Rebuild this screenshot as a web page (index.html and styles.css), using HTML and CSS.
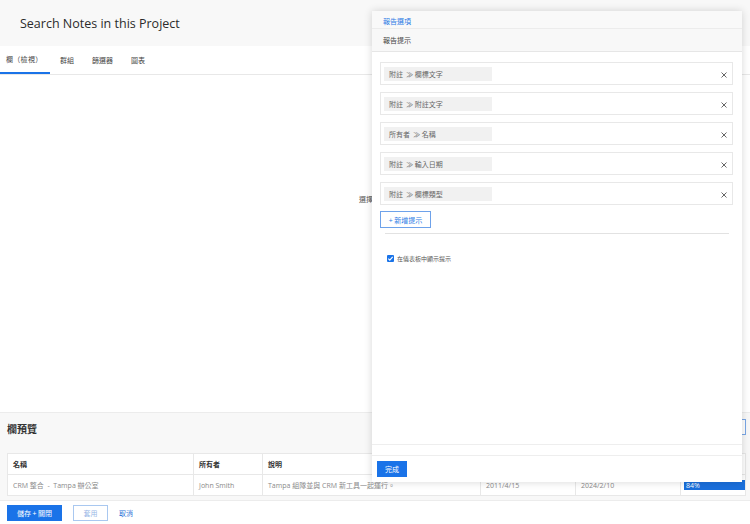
FILE: index.html
```html
<!DOCTYPE html>
<html lang="zh-Hant">
<head>
<meta charset="utf-8">
<title>Search Notes in this Project</title>
<link rel="stylesheet" href="styles.css">
</head>
<body>
<div class="page">
  <header class="header"><h1 class="title">Search Notes in this Project</h1></header>
  <nav class="tabs">
    <div class="tab active">欄（檢視）</div>
    <div class="tab">群組</div>
    <div class="tab">篩選器</div>
    <div class="tab">圖表</div>
  </nav>
  <main class="content"><span class="hint">選擇欄</span></main>
  <section class="preview">
    <div class="preview-head">
      <h2 class="preview-title">欄預覽</h2>
      <div class="preview-search"></div>
    </div>
    <div class="table">
      <div class="row head">
        <div class="cell c1">名稱</div>
        <div class="cell c2">所有者</div>
        <div class="cell c3">說明</div>
        <div class="cell c4">輸入日期</div>
        <div class="cell c5">上次更新</div>
        <div class="cell c6">完成百分比</div>
      </div>
      <div class="row body">
        <div class="cell c1">CRM 整合 &nbsp;- &nbsp;Tampa 辦公室</div>
        <div class="cell c2">John Smith</div>
        <div class="cell c3">Tampa 組隊並與 CRM 新工具一起運行。</div>
        <div class="cell c4">2011/4/15</div>
        <div class="cell c5">2024/2/10</div>
        <div class="cell c6"><div class="bar">84%</div></div>
      </div>
    </div>
  </section>
  <footer class="actions">
    <button class="btn primary save">儲存 + 關閉</button>
    <button class="btn ghost">套用</button>
    <a class="link">取消</a>
  </footer>
</div>

<aside class="panel">
  <div class="panel-tab">報告選項</div>
  <div class="panel-sub">報告提示</div>
  <div class="panel-body">
    <div class="prompt"><span class="chip">附註 &nbsp;≫ 欄標文字</span><svg class="close" viewBox="0 0 6 6" width="6" height="6"><path d="M0.5 0.5 L5.5 5.5 M5.5 0.5 L0.5 5.5" stroke="#555" stroke-width="0.9" fill="none"/></svg></div>
    <div class="prompt"><span class="chip">附註 &nbsp;≫ 附註文字</span><svg class="close" viewBox="0 0 6 6" width="6" height="6"><path d="M0.5 0.5 L5.5 5.5 M5.5 0.5 L0.5 5.5" stroke="#555" stroke-width="0.9" fill="none"/></svg></div>
    <div class="prompt"><span class="chip">所有者 &nbsp;≫ 名稱</span><svg class="close" viewBox="0 0 6 6" width="6" height="6"><path d="M0.5 0.5 L5.5 5.5 M5.5 0.5 L0.5 5.5" stroke="#555" stroke-width="0.9" fill="none"/></svg></div>
    <div class="prompt"><span class="chip">附註 &nbsp;≫ 輸入日期</span><svg class="close" viewBox="0 0 6 6" width="6" height="6"><path d="M0.5 0.5 L5.5 5.5 M5.5 0.5 L0.5 5.5" stroke="#555" stroke-width="0.9" fill="none"/></svg></div>
    <div class="prompt"><span class="chip">附註 &nbsp;≫ 欄標類型</span><svg class="close" viewBox="0 0 6 6" width="6" height="6"><path d="M0.5 0.5 L5.5 5.5 M5.5 0.5 L0.5 5.5" stroke="#555" stroke-width="0.9" fill="none"/></svg></div>
    <button class="add">+ 新增提示</button>
    <div class="sep"></div>
    <label class="check"><span class="box"><svg viewBox="0 0 8 8" width="7" height="7"><path d="M1.5 4.2 L3.2 5.8 L6.5 2.2" fill="none" stroke="#fff" stroke-width="1.3"/></svg></span>在儀表板中顯示提示</label>
  </div>
  <div class="panel-gap"></div>
  <div class="panel-foot"><button class="btn primary done">完成</button></div>
</aside>
</body>
</html>
```
FILE: styles.css
```css
* { box-sizing: border-box; }
html, body { margin: 0; padding: 0; }
body {
  width: 750px;
  height: 524px;
  overflow: hidden;
  position: relative;
  font-family: "Open Sans", "Noto Sans CJK TC", sans-serif;
  color: #333;
  background: #fff;
}
.page { display: flex; flex-direction: column; height: 524px; }
.header {
  height: 46px;
  background: #f8f8f8;
  display: flex;
  align-items: center;
  padding-left: 20px;
  flex: none;
}
.title { margin: 0; font-size: 12.5px; font-weight: 400; color: #2b2b2b; }
.tabs {
  height: 29px;
  flex: none;
  display: flex;
  border-bottom: 1px solid #e8e8e8;
  font-family: "Noto Sans CJK TC", sans-serif;
  font-size: 7px;
  color: #444;
}
.tab { padding: 0 9px; display: flex; align-items: center; }
.tab:first-child { padding-left: 6px; width: 50px; letter-spacing: 0.3px; }
.tab:nth-child(2) { padding-left: 10px; }
.tab.active { border-bottom: 2px solid #1a73e8; }
.content {
  flex: 1;
  font-family: "Noto Sans CJK TC", sans-serif;
  font-size: 7px;
  color: #555;
  padding: 119px 0 0 359px;
}
.preview {
  height: 88px;
  flex: none;
  background: #f8f8f8;
  border-top: 1px solid #ececec;
  padding: 0 4px 0 7px;
}
.preview-head { height: 40px; display: flex; align-items: flex-start; justify-content: space-between; }
.preview-title { margin: 8px 0 0; font-family: "Noto Sans CJK TC", sans-serif; font-size: 10px; line-height: 16px; font-weight: 700; color: #333; }
.preview-search { width: 40px; height: 16px; border: 1px solid #7aa7e6; background: #fff; margin-top: 6px; }
.table { background: #fff; border: 1px solid #e8e8e8; font-size: 7px; }
.row { display: flex; height: 20px; }
.row.head { height: 21px; border-bottom: 1px solid #e8e8e8; font-family: "Noto Sans CJK TC", sans-serif; font-weight: 600; color: #333; }
.row.body .cell { color: #8a8a8a; }
.cell { display: flex; align-items: center; padding-left: 5px; border-right: 1px solid #e8e8e8; white-space: nowrap; overflow: hidden; }
.cell:last-child { border-right: 0; }
.c1 { width: 186px; } .c2 { width: 69px; } .c3 { width: 218px; }
.c4 { width: 95px; } .c5 { width: 105px; } .c6 { flex: 1; padding-left: 3px; }
.bar { width: 100%; height: 10px; background: #1a6fdc; color: #fff; font-size: 7px; display: flex; align-items: center; padding-left: 2px; }
.actions {
  height: 24px;
  flex: none;
  border-top: 1px solid #ececec;
  display: flex;
  align-items: center;
  padding-left: 7px;
  gap: 11px;
  font-family: "Noto Sans CJK TC", sans-serif;
}
.btn { font-family: "Noto Sans CJK TC", sans-serif; font-size: 7px; height: 16px; border: 1px solid #1a73e8; padding: 0; cursor: pointer; }
.btn.primary { background: #1a73e8; color: #fff; }
.btn.save { width: 55px; }
.btn.ghost { background: #fff; border-color: #a9c8f0; color: #9ab8e6; width: 35px; }
.link { font-size: 7px; color: #2a6fd6; }

.panel {
  position: absolute;
  left: 372px;
  top: 11px;
  width: 370px;
  height: 471px;
  background: #fff;
  box-shadow: 0 0 8px rgba(0,0,0,0.16);
  display: flex;
  flex-direction: column;
  font-family: "Noto Sans CJK TC", sans-serif;
  font-size: 7px;
}
.panel-tab { height: 18px; padding-top: 2px; background: #f9f9f9; border-bottom: 1px solid #ececec; color: #2c7be5; display: flex; align-items: center; padding-left: 11px; }
.panel-sub { height: 23px; background: #f8f8f8; border-bottom: 1px solid #e6e6e6; color: #444; display: flex; align-items: center; padding-left: 11px; }
.panel-body { flex: 1; padding: 10px 9px 0 8px; display: flex; flex-direction: column; }
.prompt {
  height: 23px;
  border: 1px solid #e8e8e8;
  display: flex;
  align-items: center;
  justify-content: space-between;
  padding: 0 5px 0 3px;
  margin-bottom: 7px;
}
.chip { width: 108px; height: 14px; background: #f1f1f1; color: #666; display: flex; align-items: center; padding-left: 5px; }
.close { margin-top: 2px; }
.add { align-self: flex-start; margin-top: -1px; height: 17px; width: 51px; background: #fff; border: 1px solid #6ea2ea; color: #2c7be5; font-family: "Noto Sans CJK TC", sans-serif; font-size: 7px; padding: 0; }
.sep { height: 1px; background: #e2e2e2; margin: 5px 4px 0 5px; }
.check { display: flex; align-items: center; gap: 3px; margin: 20px 0 0 7px; color: #555; font-size: 6px; }
.box { width: 7px; height: 7px; background: #1a73e8; border-radius: 1px; display: flex; align-items: center; justify-content: center; }
.panel-gap { height: 11px; border-top: 1px solid #eee; }
.panel-foot { height: 27px; border-top: 1px solid #eee; display: flex; align-items: center; padding-left: 5px; }
.btn.done { width: 30px; }
```
